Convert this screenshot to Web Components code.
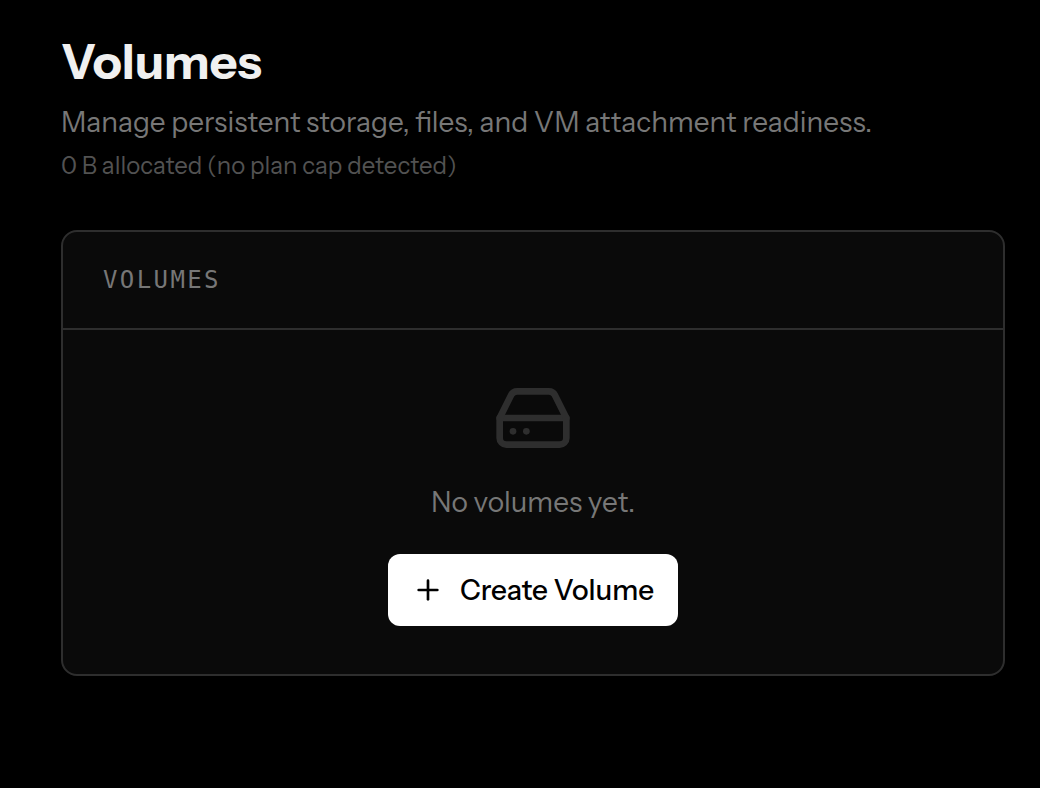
<!DOCTYPE html>
<html lang="en">
<head>
<meta charset="utf-8">
<meta name="viewport" content="width=device-width, initial-scale=1">
<title>Volumes</title>
<style>
  html { background: #000; }
  body {
    margin: 0;
    font-family: "Instrument Sans", Inter, "Liberation Sans", sans-serif;
    color: #f0f0f0;
    -webkit-font-smoothing: antialiased;
    --muted: #777;
    --faint: #525252;
    --line: #2e2e2e;
    --surface: #0a0a0a;
  }
</style>
</head>
<body>
<volumes-page></volumes-page>

<script>
  const define = (name, html) => {
    const template = document.createElement('template');
    template.innerHTML = html;
    customElements.define(name, class extends HTMLElement {
      constructor() {
        super();
        this.attachShadow({ mode: 'open' }).append(template.content.cloneNode(true));
      }
    });
  };

  define('page-header', `
    <style>
      :host { display: block; }
      h1 { margin: 0; font-size: 48px; line-height: 60px; font-weight: 700; color: #f0f0f0; }
      p { margin: 0; }
      .lead { margin-top: 10px; font-size: 28px; line-height: 40px; color: var(--muted); }
      .note { margin-top: 8px; font-size: 24px; line-height: 32px; color: var(--faint); }
    </style>
    <h1><slot name="title"></slot></h1>
    <p class="lead"><slot name="lead"></slot></p>
    <p class="note"><slot name="note"></slot></p>
  `);

  define('panel-card', `
    <style>
      :host { display: block; border: 2px solid var(--line); border-radius: 16px; background: var(--surface); }
      header { padding: 32px 40px; border-bottom: 2px solid var(--line); }
      h2 {
        margin: 0; font: 400 24px/32px "DejaVu Sans Mono", monospace;
        letter-spacing: 0.1em; text-transform: uppercase; color: var(--muted);
      }
    </style>
    <section>
      <header><h2><slot name="heading"></slot></h2></header>
      <slot></slot>
    </section>
  `);

  define('empty-state', `
    <style>
      :host { display: flex; flex-direction: column; align-items: center; padding: 48px; }
      svg { display: block; width: 80px; height: 80px; color: var(--line); }
      p { margin: 24px 0 32px; font-size: 28px; line-height: 40px; color: var(--muted); }
    </style>
    <svg viewBox="0 0 24 24" fill="none" stroke="currentColor" stroke-width="2" stroke-linecap="round" stroke-linejoin="round" aria-hidden="true">
      <path d="M22 12H2"/>
      <path d="M5.45 5.11 2 12v6a2 2 0 0 0 2 2h16a2 2 0 0 0 2-2v-6l-3.45-6.89A2 2 0 0 0 16.76 4H7.24a2 2 0 0 0-1.79 1.11z"/>
      <path d="M6 16h.01"/><path d="M10 16h.01"/>
    </svg>
    <p><slot></slot></p>
    <slot name="action"></slot>
  `);

  define('create-button', `
    <style>
      :host { display: block; }
      button {
        display: flex; align-items: center; gap: 16px; height: 72px; padding: 0 24px;
        border: 0; border-radius: 12px; background: #fff; color: #000;
        font: inherit; font-size: 28px; line-height: 40px; font-weight: 500; cursor: pointer;
      }
      svg { width: 32px; height: 32px; }
    </style>
    <button type="button">
      <svg viewBox="0 0 24 24" fill="none" stroke="currentColor" stroke-width="2" stroke-linecap="round" stroke-linejoin="round" aria-hidden="true"><path d="M5 12h14"/><path d="M12 5v14"/></svg>
      <span><slot></slot></span>
    </button>
  `);

  define('volumes-page', `
    <style>
      :host { display: block; padding: 32px 35px 48px 61px; }
      panel-card { margin-top: 48px; }
    </style>
    <main>
      <page-header>
        <span slot="title">Volumes</span>
        <span slot="lead">Manage persistent storage, files, and VM attachment readiness.</span>
        <span slot="note">0 B allocated (no plan cap detected)</span>
      </page-header>
      <panel-card>
        <span slot="heading">Volumes</span>
        <empty-state>No volumes yet.<create-button slot="action">Create Volume</create-button></empty-state>
      </panel-card>
    </main>
  `);
</script>
</body>
</html>
